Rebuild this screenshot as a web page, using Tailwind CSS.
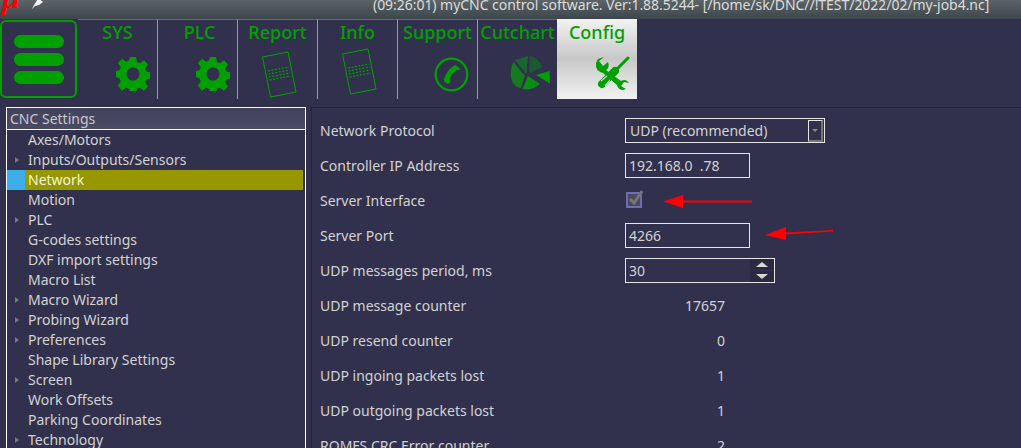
<!DOCTYPE html>
<html lang="en">
<head>
  <meta charset="UTF-8">
  <title>myCNC control software</title>
  <script src="https://cdn.jsdelivr.net/npm/@tailwindcss/browser@4"></script>
</head>
<body class="bg-[#32314d] h-[448px] w-[1021px] overflow-hidden relative font-['Noto_Sans',sans-serif] text-[14px] text-[#d2d2d2]">

  <!-- Title bar -->
  <header class="h-[19px] bg-gradient-to-b from-[#5c6468] to-[#3d464b] flex items-center overflow-hidden relative">
    <span class="absolute left-[2px] -top-[19px] font-['Liberation_Serif',serif] italic font-bold text-[32px] leading-[32px] text-[#ff0000]">μ</span>
    <svg class="absolute left-[31px] top-[-2px]" width="13" height="12" viewBox="0 0 13 12"><path d="M7 0 L12 4 L8 7 L4 8 L1 11 L3 7 L5 4 Z" fill="#f4f4f4"/></svg>
    <div class="pl-[373px] -mt-[10px] whitespace-nowrap text-[#dcdcdc] text-[14px] leading-[19px] tracking-[-0.044px]">(09:26:01) myCNC control software. Ver:1.88.5244- [/home/sk/DNC//!TEST/2022/02/my-job4.nc]</div>
  </header>

  <!-- Toolbar -->
  <nav class="flex h-[80px]">
    <button class="w-[77px] h-[78px] mt-[1px] border-2 border-[#00a000] rounded-[6px] flex flex-col items-center justify-center gap-[5px]">
      <span class="block w-[50px] h-[13px] rounded-full bg-[#00a000]"></span>
      <span class="block w-[50px] h-[13px] rounded-full bg-[#00a000]"></span>
      <span class="block w-[50px] h-[13px] rounded-full bg-[#00a000]"></span>
    </button>

    <div class="w-[80px] ml-[1px] border-r border-[#9a9a9a] border-t border-t-[#6b6b75] relative text-center text-[#00a000] text-[18px] font-medium leading-[24px]">
      <span>SYS</span>
      <svg class="absolute left-[38px] top-[37px]" width="34" height="34" viewBox="0 0 34 34"><path fill="#00a000" fill-rule="evenodd" d="M14 0h6l1 5 3 1.300 4-3 4.200 4.200-3 4 1.300 3 4.500 1v6l-4.500 1-1.300 3 3 4-4.200 4.200-4-3-3 1.300-1 4.500h-6l-1-4.500-3-1.300-4 3L1.800 28.500l3-4L3.500 21.500 0 20v-6l3.500-1 1.300-3-3-4L6 1.800l4 3L13 3.500z M17 10.500a6.500 6.500 0 1 0 .01 0z"/></svg>
    </div>
    <div class="w-[80px] border-r border-[#9a9a9a] border-t border-t-[#6b6b75] relative text-center text-[#00a000] text-[18px] font-medium leading-[24px]">
      <span class="relative left-[2px]">PLC</span>
      <svg class="absolute left-[38px] top-[37px]" width="34" height="34" viewBox="0 0 34 34"><path fill="#00a000" fill-rule="evenodd" d="M14 0h6l1 5 3 1.300 4-3 4.200 4.200-3 4 1.300 3 4.500 1v6l-4.500 1-1.300 3 3 4-4.200 4.200-4-3-3 1.300-1 4.500h-6l-1-4.500-3-1.300-4 3L1.800 28.500l3-4L3.500 21.500 0 20v-6l3.500-1 1.300-3-3-4L6 1.800l4 3L13 3.500z M17 10.500a6.500 6.500 0 1 0 .01 0z"/></svg>
    </div>
    <div class="w-[80px] border-r border-[#9a9a9a] border-t border-t-[#6b6b75] relative text-center text-[#00a000] text-[18px] font-medium leading-[24px]">
      Report
      <svg class="absolute left-[22px] top-[31px]" width="38" height="48" viewBox="0 0 38 48"><g fill="none" stroke="#00a000"><path d="M2.500 6 L28 1 L36 41 L10.500 46 Z"/><path d="M8 20 L29 16 M8.500 23 L29.500 19 M9 26 L30 22 M9.500 29 L30.500 25" stroke-dasharray="2 1.500" stroke-width="1.200"/></g></svg>
    </div>
    <div class="w-[80px] border-r border-[#9a9a9a] border-t border-t-[#6b6b75] relative text-center text-[#00a000] text-[18px] font-medium leading-[24px]">
      Info
      <svg class="absolute left-[22px] top-[28px]" width="38" height="48" viewBox="0 0 38 48"><g fill="none" stroke="#00a000"><path d="M2.500 6 L28 1 L36 41 L10.500 46 Z"/><path d="M8 20 L29 16 M8.500 23 L29.500 19 M9 26 L30 22 M9.500 29 L30.500 25" stroke-dasharray="2 1.500" stroke-width="1.200"/></g></svg>
    </div>
    <div class="w-[80px] border-r border-[#9a9a9a] border-t border-t-[#6b6b75] relative text-center text-[#00a000] text-[18px] font-medium leading-[24px] whitespace-nowrap">
      Support
      <svg class="absolute left-[36px] top-[37px]" width="35" height="35" viewBox="0 0 35 35"><circle cx="17.500" cy="17.500" r="15.800" fill="none" stroke="#00a000" stroke-width="2.200"/><path fill="#00a000" d="M22 8.500 L26 11.500 Q26 13.500 24.500 13.500 L22.500 13 Q20 14 18.500 17 Q16.500 20 15.500 22 L16.500 24.500 Q16 26.500 14 27 L10 24.500 Q9.500 22 11.500 18.500 Q14.500 12 19.500 9 Q21 8 22 8.500 Z"/></svg>
    </div>
    <div class="w-[79px] relative text-center text-[#00a000] text-[18px] font-medium leading-[24px] border-t border-t-[#6b6b75] whitespace-nowrap">
      Cutchart
      <svg class="absolute left-[2px] top-[25px]" width="80" height="55" viewBox="0 0 80 55">
        <path fill="#1a6530" d="M35 15 L48 11 L46.500 29 Z"/>
        <path fill="#1b5a30" d="M49.500 11 Q58 12 62.500 22 L49.500 28.500 Z"/>
        <path fill="#137a1e" d="M33.500 17 L45 31 L40.500 43.500 Q30 40 30.700 28 Q31 21 33.500 17 Z"/>
        <path fill="#0b8c14" d="M48 31 L60 39 Q52 46 42.500 44 Z"/>
        <path fill="#00a000" d="M56 30 L69.500 26 L70 38.500 Z"/>
      </svg>
    </div>
    <div class="w-[80px] relative text-center text-[#00a000] text-[18px] font-medium leading-[24px] pt-px bg-gradient-to-b from-[#f2f2f2] via-[#c8c8c8] to-[#f2f2f2]">
      Config
      <svg class="absolute left-[38px] top-[37px]" width="36" height="36" viewBox="0 0 36 36">
        <path fill="#00a000" d="M9 1 L4 5 L8 10 L13 6 Q15 12 11 14 L26 25 Q31 22 34 27 L29 26 L26 30 L31 33 Q24 36 22 29 L8 17 Q0 15 1 7 L3 3 Z"/>
        <path d="M33 2 L23 12" stroke="#00a000" stroke-width="3" stroke-linecap="round"/>
        <path d="M20 15 L7 28" stroke="#00a000" stroke-width="8" stroke-linecap="round"/>
        <path d="M6 25 L12 20 M10 30 L15 24" stroke="#d4d4d4" stroke-width="1.200"/>
      </svg>
    </div>
  </nav>

  <!-- Main -->
  <main class="flex items-start mt-[8px]">
    <!-- Settings tree -->
    <aside class="ml-[6px] w-[300px] h-[341px] border-x border-white overflow-hidden shrink-0">
      <div class="h-[23px] -mx-px border border-white bg-gradient-to-b from-[#43425c] to-[#4b4a63] pl-[3px] leading-[21px] text-[#c8c8d0]">CNC Settings</div>
      <ul class="leading-[20px] pr-[2px]">
        <li class="h-[20px] pl-[21px]">Axes/Motors</li>
        <li class="h-[20px] pl-[21px] relative"><span class="absolute left-[8px] top-[7px] border-l-[4px] border-y-[3px] border-y-transparent border-l-[#77778a]"></span>Inputs/Outputs/Sensors</li>
        <li class="h-[20px] flex bg-[#979700] text-[#f4f4d8]"><span class="w-[18px] bg-[#3daee9] mr-[3px]"></span>Network</li>
        <li class="h-[20px] pl-[21px]">Motion</li>
        <li class="h-[20px] pl-[21px] relative"><span class="absolute left-[8px] top-[7px] border-l-[4px] border-y-[3px] border-y-transparent border-l-[#77778a]"></span>PLC</li>
        <li class="h-[20px] pl-[21px]">G-codes settings</li>
        <li class="h-[20px] pl-[21px]">DXF import settings</li>
        <li class="h-[20px] pl-[21px]">Macro List</li>
        <li class="h-[20px] pl-[21px] relative"><span class="absolute left-[8px] top-[7px] border-l-[4px] border-y-[3px] border-y-transparent border-l-[#77778a]"></span>Macro Wizard</li>
        <li class="h-[20px] pl-[21px] relative"><span class="absolute left-[8px] top-[7px] border-l-[4px] border-y-[3px] border-y-transparent border-l-[#77778a]"></span>Probing Wizard</li>
        <li class="h-[20px] pl-[21px] relative"><span class="absolute left-[8px] top-[7px] border-l-[4px] border-y-[3px] border-y-transparent border-l-[#77778a]"></span>Preferences</li>
        <li class="h-[20px] pl-[21px]">Shape Library Settings</li>
        <li class="h-[20px] pl-[21px] relative"><span class="absolute left-[8px] top-[7px] border-l-[4px] border-y-[3px] border-y-transparent border-l-[#77778a]"></span>Screen</li>
        <li class="h-[20px] pl-[21px]">Work Offsets</li>
        <li class="h-[20px] pl-[21px]">Parking Coordinates</li>
        <li class="h-[20px] pl-[21px] relative"><span class="absolute left-[8px] top-[7px] border-l-[4px] border-y-[3px] border-y-transparent border-l-[#77778a]"></span>Technology</li>
      </ul>
    </aside>

    <!-- Network settings -->
    <section class="ml-[5px] flex-1 h-[341px] border-l border-t border-[#25243a] pl-[8px] pt-[5px] overflow-hidden">
      <div class="grid grid-cols-[305px_1fr] auto-rows-[35px] items-center">
        <div>Network Protocol</div>
        <div class="w-[200px] h-[25px] border border-[#e6e6e6] flex justify-between items-center pl-[4px] pr-[1px]">UDP (recommended)
          <span class="w-[15px] h-[22px] border-l border-t border-[#e6e6e6] border-r-2 border-b-2 border-r-[#777] border-b-[#777] flex items-center justify-center"><span class="border-t-[3px] border-x-[3px] border-x-transparent border-t-[#888]"></span></span>
        </div>

        <div>Controller IP Address</div>
        <div class="w-[125px] h-[25px] border border-[#e6e6e6] pl-[3px] leading-[23px]">192.168.0&nbsp;&nbsp;.78</div>

        <div>Server Interface</div>
        <div>
          <svg width="19" height="20" viewBox="0 0 19 20" class="-mt-[3px]"><rect x="2" y="4" width="14" height="14" fill="#4a4960" stroke="#6f6db0" stroke-width="2"/><path d="M5 10 L9 14 L17 2" fill="none" stroke="#757575" stroke-width="3"/></svg>
        </div>

        <div>Server Port</div>
        <div class="w-[125px] h-[25px] border border-[#e6e6e6] pl-[3px] leading-[23px]">4266</div>

        <div>UDP messages period, ms</div>
        <div class="w-[150px] h-[25px] border border-[#e6e6e6] pl-[3px] leading-[23px] flex justify-between">30
          <span class="w-[24px] flex flex-col gap-px">
            <span class="h-[11px] bg-[#2a2940] flex items-center justify-center"><span class="border-b-[5px] border-x-[6px] border-x-transparent border-b-[#d8d8d8]"></span></span>
            <span class="h-[11px] bg-[#2a2940] flex items-center justify-center"><span class="border-t-[5px] border-x-[6px] border-x-transparent border-t-[#d8d8d8]"></span></span>
          </span>
        </div>

        <div>UDP message counter</div>
        <div class="w-[100px] text-right">17657</div>

        <div>UDP resend counter</div>
        <div class="w-[100px] text-right">0</div>

        <div>UDP ingoing packets lost</div>
        <div class="w-[100px] text-right">1</div>

        <div>UDP outgoing packets lost</div>
        <div class="w-[100px] text-right">1</div>

        <div>ROMFS CRC Error counter</div>
        <div class="w-[100px] text-right">2</div>
      </div>
    </section>
  </main>

  <!-- Annotation arrows -->
  <svg class="absolute left-[660px] top-[190px]" width="180" height="55" viewBox="0 0 180 55">
    <path d="M3 11.500 L23 5 L23 10.500 L92 10.500 L92 12.500 L23 12.500 L23 18 Z" fill="#ff0000"/>
    <path d="M105 45 L126 37 L126 42.500 L173 40 L173 41.500 L126 44.500 L126 50 Z" fill="#ff0000"/>
  </svg>
</body>
</html>
